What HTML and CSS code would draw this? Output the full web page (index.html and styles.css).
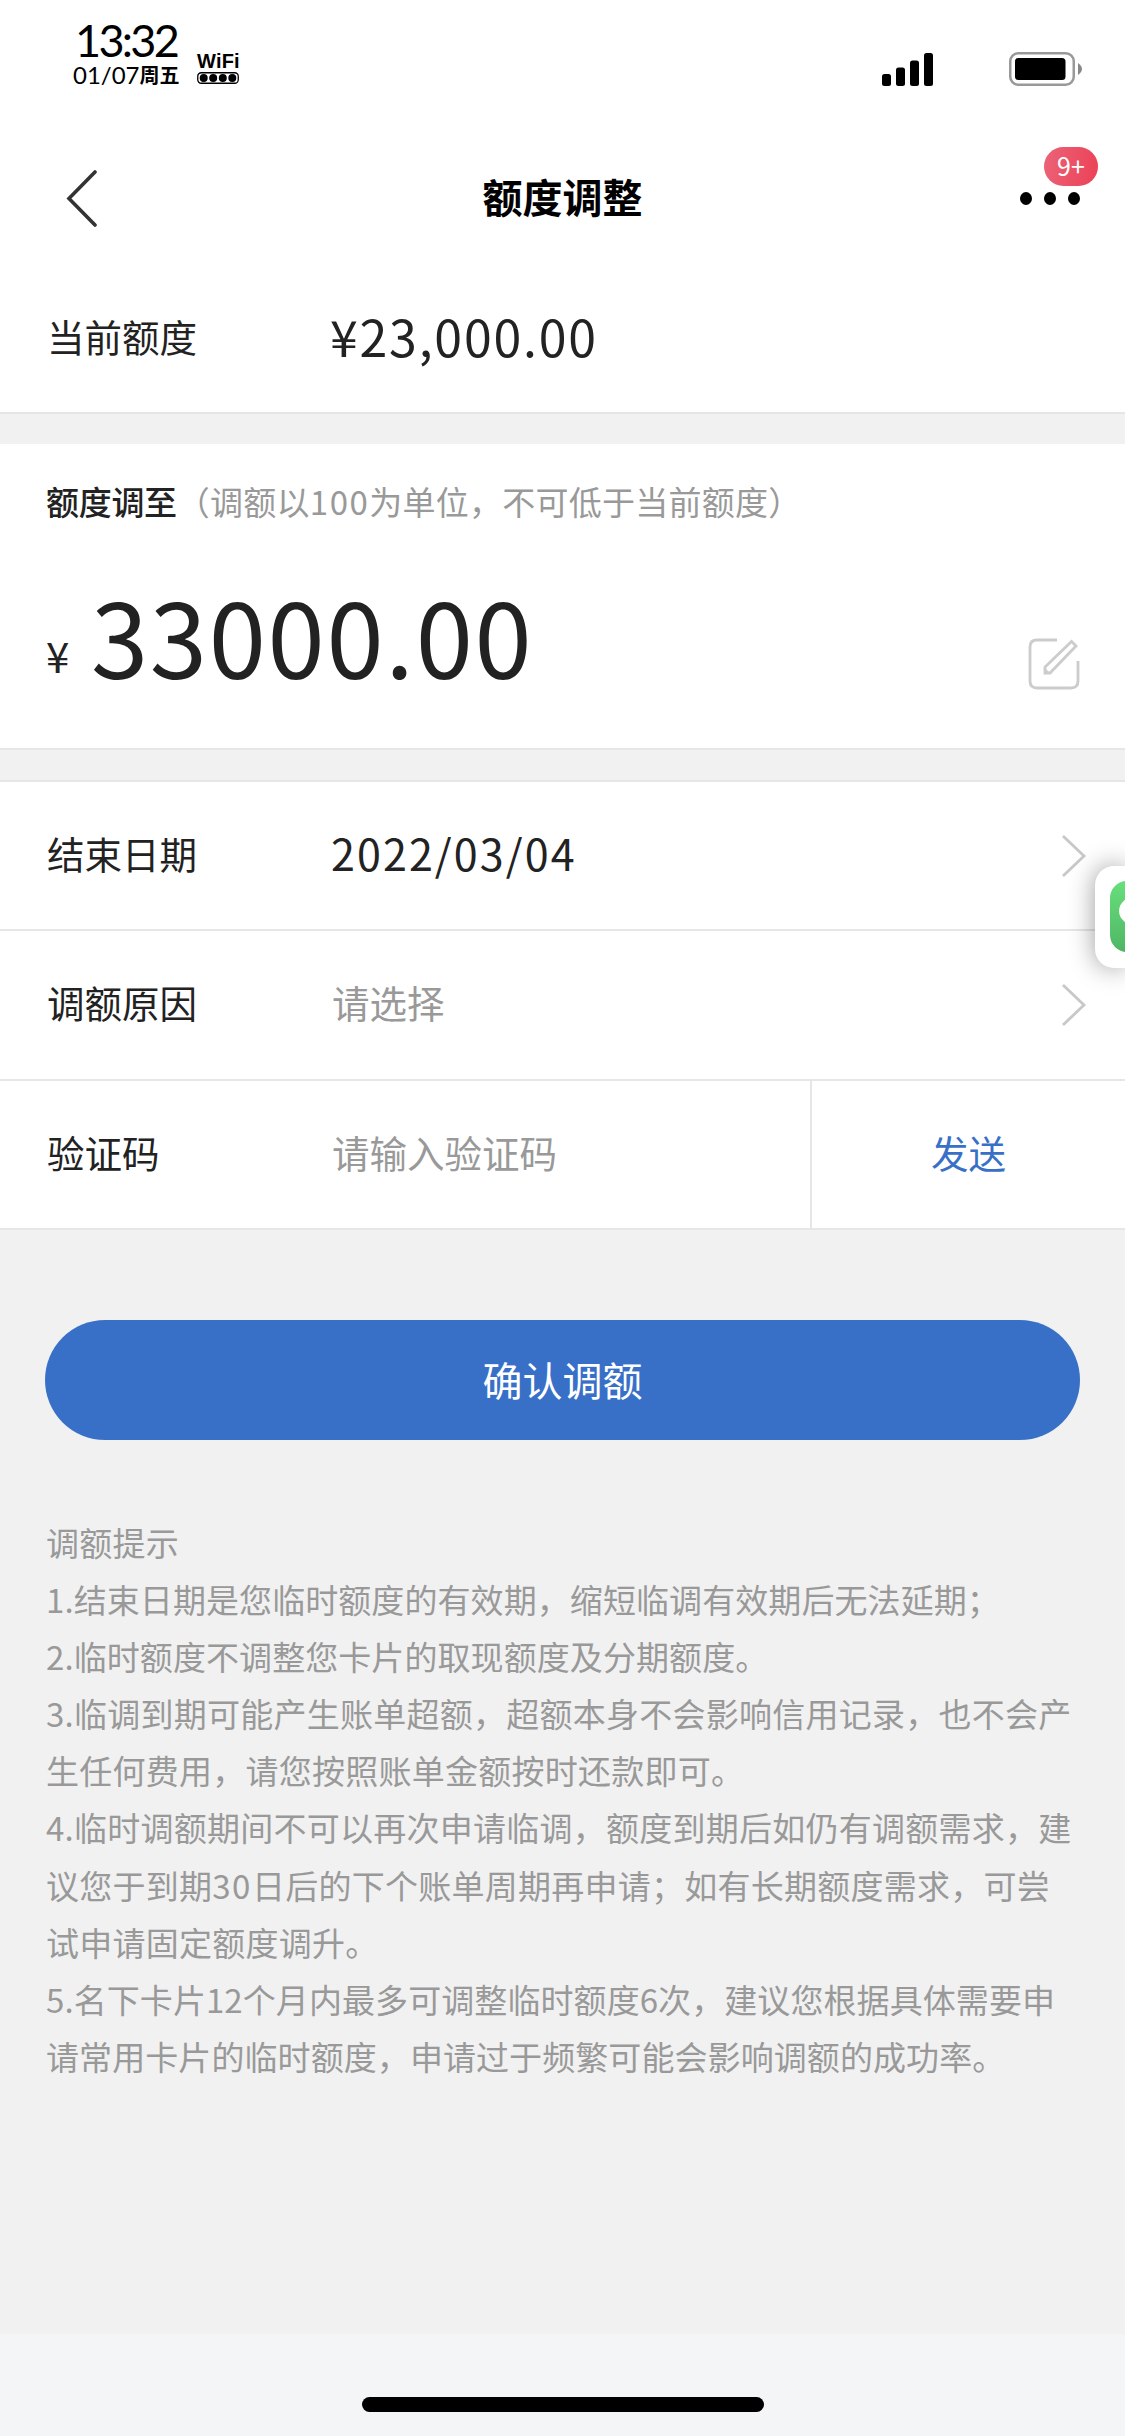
FILE: index.html
```
<!DOCTYPE html>
<html lang="zh-CN">
<head>
<meta charset="utf-8">
<title>额度调整</title>
<link rel="stylesheet" href="styles.css">
</head>
<body>
<header class="status">
  <div class="clock"><div class="time">13:32</div><div class="date">01/07<b>周五</b></div></div>
  <div class="wifi"><span>WiFi</span>
    <svg width="42" height="12" viewBox="0 0 42 12"><rect x=".75" y=".75" width="40.5" height="10.5" rx="3.5" fill="none" stroke="#000" stroke-width="1.3"/><circle cx="6.7" cy="6" r="4"/><circle cx="16.2" cy="6" r="4"/><circle cx="25.8" cy="6" r="4"/><circle cx="35.3" cy="6" r="4"/></svg>
  </div>
  <svg class="signal" width="51" height="33" viewBox="0 0 51 33"><rect y="21" width="9" height="12" rx="2.5"/><rect x="14" y="14.500" width="9" height="18.500" rx="2.500"/><rect x="28" y="7.500" width="9" height="25.500" rx="2.500"/><rect x="42" width="9" height="33" rx="2.500"/></svg>
  <svg class="battery" width="74" height="34" viewBox="0 0 74 34"><rect x="1.250" y="1.250" width="63.500" height="31.500" rx="8" fill="none" stroke="#999" stroke-width="2.500"/><rect x="6" y="6" width="50.500" height="22" rx="3.500"/><path d="M69 11q8 6 0 12z" fill="#888"/></svg>
</header>
<nav class="nav">
  <svg class="back" width="34" height="58" viewBox="0 0 34 58"><path d="M30 3 4 29.500 30 56" fill="none" stroke="#333" stroke-width="3.600" stroke-linecap="round"/></svg>
  <h1>额度调整</h1>
  <div class="more"><i></i><i></i><i></i><span class="badge">9+</span></div>
</nav>
<main>
  <section class="current"><label>当前额度</label><span class="money">¥23,000.00</span></section>
  <section class="adjust">
    <p class="adjust-title"><b>额度调至</b>（调额以<span class="num">100</span>为单位，不可低于当前额度）</p>
    <div class="amount">
      <span class="yen">¥</span><span class="value">33000.00</span>
      <svg class="edit" width="52" height="52" viewBox="0 0 52 52" fill="none" stroke="#ccc" stroke-width="2.800"><path d="M29 2H9Q2 2 2 9V43Q2 50 9 50H43Q50 50 50 43V23"/><path d="M17 35V29L43.500 3.500 48 8 22 35Z"/><path d="M17 30 22 35H17Z" fill="#ccc" stroke="none"/></svg>
    </div>
  </section>
  <section class="form">
    <div class="row"><label>结束日期</label><span class="day">2022/03/04</span><svg class="arrow" width="26" height="44" viewBox="0 0 26 44"><path d="M2 2 23 22 2 42" fill="none" stroke="#c8c8c8" stroke-width="2.800"/></svg></div>
    <div class="row"><label>调额原因</label><span class="hint">请选择</span><svg class="arrow" width="26" height="44" viewBox="0 0 26 44"><path d="M2 2 23 22 2 42" fill="none" stroke="#c8c8c8" stroke-width="2.800"/></svg></div>
    <div class="row"><label>验证码</label><span class="hint">请输入验证码</span><a class="send">发送</a></div>
  </section>
  <button class="confirm">确认调额</button>
  <section class="tips">
    <p>调额提示</p>
    <p class="tight">1.结束日期是您临时额度的有效期，缩短临调有效期后无法延期；</p>
    <p class="tight">2.临时额度不调整您卡片的取现额度及分期额度。</p>
    <p>3.临调到期可能产生账单超额，超额本身不会影响信用记录，也不会产<br>生任何费用，请您按照账单金额按时还款即可。</p>
    <p>4.临时调额期间不可以再次申请临调，额度到期后如仍有调额需求，建<br>议您于到期<span class="num">30</span>日后的下个账单周期再申请；如有长期额度需求，可尝<br>试申请固定额度调升。</p>
    <p class="tight">5.名下卡片12个月内最多可调整临时额度6次，建议您根据具体需要申<br>请常用卡片的临时额度，申请过于频繁可能会影响调额的成功率。</p>
  </section>
</main>
<footer><div class="home"></div></footer>
<aside class="float"><svg width="15" height="71" viewBox="0 0 15 71"><defs><linearGradient id="g" x2="0" y2="1"><stop stop-color="#68df7c"/><stop offset="1" stop-color="#4fb664"/></linearGradient></defs><rect width="71" height="71" rx="17" fill="url(#g)"/><ellipse cx="27" cy="30" rx="18" ry="15" fill="#fff"/></svg></aside>
</body>
</html>
```
FILE: styles.css
```
* { box-sizing: border-box; }
body {
  margin: 0; width: 1125px; height: 2436px; position: relative; overflow: hidden;
  display: flex; flex-direction: column; background: #f1f1f1; color: #222;
  font-family: "Noto Sans CJK SC", sans-serif; font-weight: 400; font-size: 37.5px; line-height: 1;
}
svg { display: block; flex: none; }
h1, p { margin: 0; }
.status { height: 132px; background: #fff; color: #000; display: flex; align-items: flex-start; padding-left: 73px; }
.clock { width: 124px; padding-top: 17px; white-space: nowrap; font-family: Lato, "Noto Sans CJK SC", sans-serif; }
.time { font-size: 45px; line-height: 46px; letter-spacing: -2.7px; padding-left: 2px; }
.date { font-size: 24px; line-height: 24px; height: 24px; display: flex; align-items: center; }
.date b { font-family: "Noto Sans CJK SC", sans-serif; font-size: 20px; font-weight: 700; }
.wifi { width: 42px; padding-top: 50px; font-size: 20px; line-height: 22px; font-weight: 700; }
.wifi span { display: block; font-family: "Liberation Sans", sans-serif; letter-spacing: .2px; }
.signal { margin: 53px 0 0 643px; }
.battery { margin: 52px 0 0 76px; }
.nav { height: 132px; background: #fff; display: flex; align-items: center; justify-content: space-between; padding: 0 45px 0 65px; }
.back { margin-top: -1px; }
h1 { font-size: 40px; font-weight: 700; color: #000; margin-left: 6px; margin-top: -5px; }
.more { position: relative; display: flex; gap: 12px; width: 60px; }
.more i { width: 12px; height: 13px; border-radius: 50%; background: #000; }
.badge {
  position: absolute; left: 24px; top: -45px; width: 54px; height: 39px; border-radius: 20px;
  background: linear-gradient(100deg, #eb6378, #ec4156); color: #fff;
  font-size: 25px; line-height: 36px; text-align: center;
}
label { width: 332px; padding-left: 47px; flex: none; }
.current { height: 150px; background: #fff; border-bottom: 2px solid #e5e5e5; display: flex; align-items: center; padding-bottom: 4px; }
.money { font-size: 50px; letter-spacing: 1.8px; margin-left: -2px; padding-bottom: 3px; }
.adjust { margin-top: 30px; height: 306px; background: #fff; border-bottom: 2px solid #e6e6e6; }
.adjust-title { font-size: 33px; line-height: 50px; padding: 32px 0 0 46px; color: #999; white-space: nowrap; letter-spacing: .25px; }
.adjust-title b { font-weight: 500; color: #222; letter-spacing: -.3px; }
.num { letter-spacing: 1.5px; }
.amount { display: flex; align-items: baseline; padding: 49px 45px 0 46px; }
.yen { font-size: 42px; width: 45px; position: relative; top: -6px; }
.value { font-size: 103px; line-height: 120px; letter-spacing: 1.7px; }
.edit { margin-left: auto; align-self: flex-end; margin-bottom: 5px; }
.form { margin-top: 30px; background: #fff; border-top: 2px solid #e6e6e6; }
.row { height: 150px; display: flex; align-items: center; border-bottom: 2px solid #e6e6e6; }
.row:first-child, .row:last-child { height: 149px; }
.row label, .hint { padding-bottom: 6px; }
.day { font-size: 43px; letter-spacing: 2.1px; padding-bottom: 6px; margin-left: -1px; }
.hint { color: #999; }
.arrow { margin: 0 38px 0 auto; }
.send { margin-left: auto; width: 315px; height: 100%; padding-bottom: 6px; border-left: 2px solid #e6e6e6; color: #3870c8; display: flex; align-items: center; justify-content: center; }
.confirm { display: block; margin: 90px 45px 0; width: 1035px; height: 120px; padding: 0 0 2px; border: 0; border-radius: 60px; background: #3870c8; color: #fff; font: inherit; font-size: 40px; }
.tips { padding: 74px 0 0 46px; font-size: 33px; line-height: 57.1px; letter-spacing: .25px; color: #999; white-space: nowrap; }
.tips .tight { letter-spacing: 0.08px; }
footer { margin-top: auto; height: 102px; background: #f3f5f7; }
.home { width: 402px; height: 15px; margin: 63px auto 0; border-radius: 8px; background: #000; }
.float { position: absolute; right: 0; top: 866px; width: 30px; height: 102px; padding: 15px 0 0 15px; background: #fff; border-radius: 19px 0 0 19px; box-shadow: 0 0 26px rgba(0,0,0,.4); }
```
